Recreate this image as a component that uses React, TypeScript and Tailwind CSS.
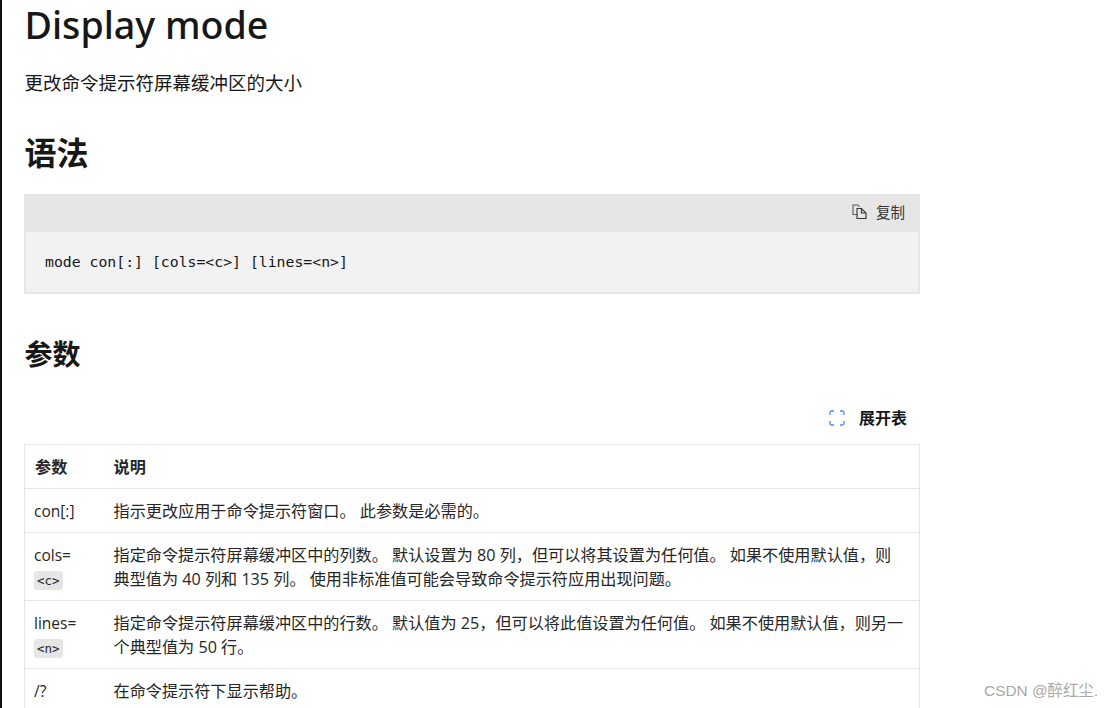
const cjk = "font-['Open_Sans','Noto_Sans_CJK_SC',sans-serif]";
const mono = "font-['DejaVu_Sans_Mono','Liberation_Mono',monospace]";

const rows = [
  { name: "con[:]", desc: "指示更改应用于命令提示符窗口。 此参数是必需的。" },
  {
    name: "cols=",
    code: "<c>",
    desc: "指定命令提示符屏幕缓冲区中的列数。 默认设置为 80 列，但可以将其设置为任何值。 如果不使用默认值，则典型值为 40 列和 135 列。 使用非标准值可能会导致命令提示符应用出现问题。",
  },
  {
    name: "lines=",
    code: "<n>",
    desc: "指定命令提示符屏幕缓冲区中的行数。 默认值为 25，但可以将此值设置为任何值。 如果不使用默认值，则另一个典型值为 50 行。",
  },
  { name: "/?", desc: "在命令提示符下显示帮助。" },
];

const CopyIcon = () => (
  <svg width="15" height="15" viewBox="0 0 15 15" fill="none" strokeWidth="1.1" className="mb-[3px]">
    <path d="M5.500 10.500H1V1h5l1.500 2" stroke="#5a5a5a" />
    <path d="M5 4.500h4.500L14 9v5.500H5z" stroke="#333" />
    <path d="M9.500 4.500V9H14" stroke="#333" />
  </svg>
);

const ExpandIcon = () => (
  <svg width="16" height="16" viewBox="0 0 16 16" fill="none" stroke="#4f8fdc" strokeWidth="1.3">
    <path d="M1 5V2.500A1.500 1.500 0 0 1 2.500 1H5" />
    <path d="M11 1h2.500A1.500 1.500 0 0 1 15 2.500V5" />
    <path d="M15 11v2.500a1.500 1.500 0 0 1-1.500 1.500H11" />
    <path d="M5 15H2.500A1.500 1.500 0 0 1 1 13.500V11" />
  </svg>
);

export default function App() {
  return (
    <div className={`relative h-[708px] overflow-hidden bg-white text-[#171717] ${cjk}`}>
      <div className="h-full border-l-2 border-[#111] pl-[22px]">
        <div className="w-[896px]">
          <h1 className="pl-[0.500px] font-['Noto_Sans',sans-serif] text-[37.600px] leading-[50px] font-medium">Display mode</h1>
          <p className="mt-[21px] pl-[0.500px] text-[18.500px] leading-[24px]">更改命令提示符屏幕缓冲区的大小</p>
          <h2 className="mt-[36px] pl-[0.500px] text-[32px] leading-[44px] font-bold">语法</h2>

          <div className="mt-[19px] border-2 border-[#e6e6e6] bg-[#f2f2f2]">
            <div className="flex h-[36px] items-center justify-end gap-[9px] bg-[#e6e6e6] pr-[13px] pb-[2px] text-[14.500px] text-[#333]">
              <CopyIcon />
              <span>复制</span>
            </div>
            <pre className={`px-[19px] pt-[20px] pb-[20px] ${mono} text-[14.800px] leading-[20px] text-[#171717]`}>
              mode con[:] [cols=&lt;c&gt;] [lines=&lt;n&gt;]
            </pre>
          </div>

          <h3 className="mt-[38px] pl-[0.500px] text-[28px] leading-[44px] font-bold">参数</h3>

          <div className="mt-[28px] flex h-[28px] items-center justify-end gap-[14px] pr-[13px]">
            <ExpandIcon />
            <span className="text-[16px] font-bold">展开表</span>
          </div>

          <table className="mt-[12px] w-full table-fixed border-collapse text-[16.150px] leading-[24px] text-[#262626]">
            <colgroup>
              <col className="w-[79px]" />
              <col />
            </colgroup>
            <thead>
              <tr className="h-[44px]">
                <th className="border border-[#e6e6e6] border-r-0 pl-[10px] text-left font-bold">参数</th>
                <th className="border border-[#e6e6e6] border-l-0 pl-[10px] text-left font-bold">说明</th>
              </tr>
            </thead>
            <tbody>
              {rows.map((row) => (
                <tr key={row.name} className="border-t border-[#e6e6e6]">
                  <td className="border-l border-[#e6e6e6] pt-[10px] pb-[9px] pl-[9px] align-top text-[15.500px]">
                    <div>{row.name}</div>
                    {row.code && (
                      <div className="mt-[4px] flex h-[19px]">
                        <code className={`rounded-[3px] bg-[#e6e6e6] px-[3px] ${mono} text-[12.500px] leading-[19px]`}>
                          {row.code}
                        </code>
                      </div>
                    )}
                  </td>
                  <td className="border-r border-[#e6e6e6] pt-[10px] pr-[14px] pb-[9px] pl-[10px] align-top">{row.desc}</td>
                </tr>
              ))}
            </tbody>
          </table>
        </div>
      </div>
      <span className="absolute top-[682px] right-[14px] font-['Liberation_Sans','Noto_Sans_CJK_SC',sans-serif] text-[15.400px] leading-[18px] text-[#a8a8a8]">
        CSDN @醉红尘.
      </span>
    </div>
  );
}
